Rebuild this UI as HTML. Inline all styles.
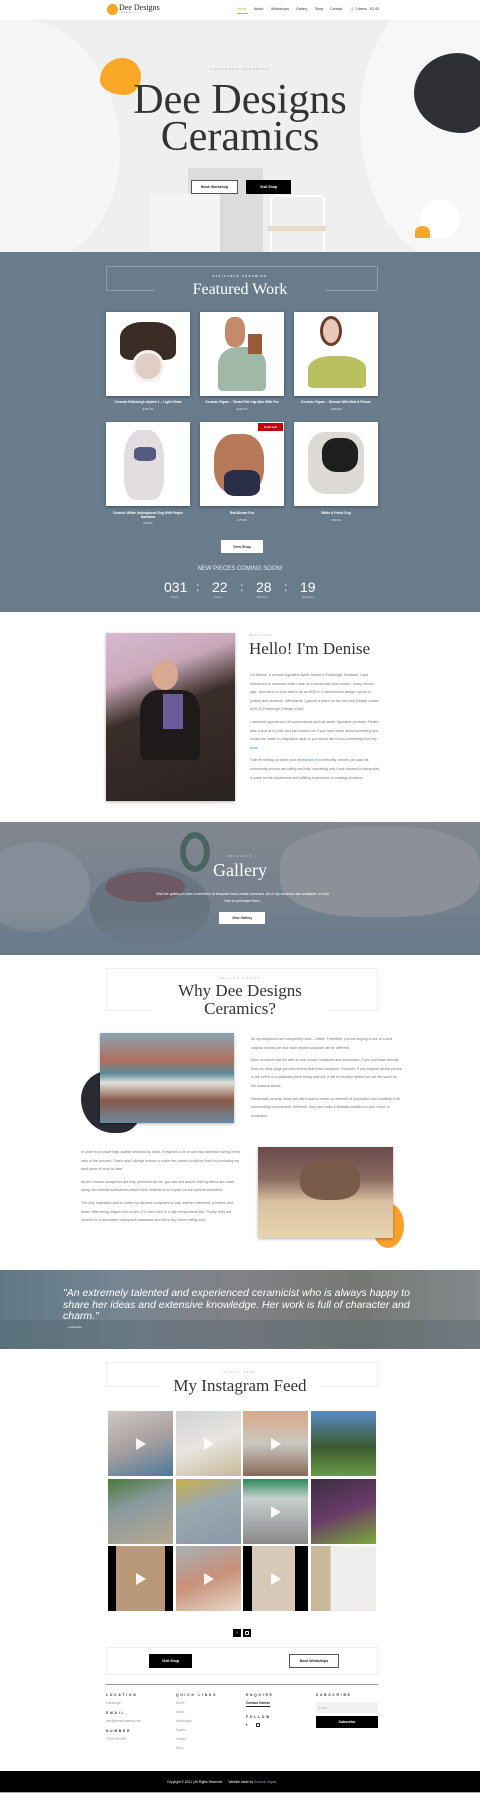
<!DOCTYPE html>
<html><head><meta charset="utf-8"><style>
*{margin:0;padding:0;box-sizing:border-box}
body{width:480px;height:1799px;position:relative;background:#fff;font-family:"Liberation Sans",sans-serif;color:#444;overflow:hidden}
.a{position:absolute}
.serif{font-family:"Liberation Serif",serif}
.c{text-align:center}
.btn{position:absolute;font-size:3.5px;font-weight:bold;display:flex;align-items:center;justify-content:center}
.blk{background:#000;color:#fff}
.out{border:1px solid #555;color:#222;background:#fff}
.small{font-size:3px;letter-spacing:1.5px}
p.t{font-size:3.6px;line-height:8.6px;color:#777;margin-bottom:4px}
.prod{position:absolute;width:84px;height:84px;background:#fff;box-shadow:0 1px 3px rgba(0,0,0,.35);overflow:hidden}
.pt{position:absolute;width:84px;text-align:center;color:#fff;font-size:3.3px;font-weight:bold}
.pp{position:absolute;width:84px;text-align:center;color:#e5e9ec;font-size:3px}
.ig{position:absolute;width:65px;height:65px}
.play{position:absolute;left:28px;top:27px;width:0;height:0;border-left:10px solid #fff;border-top:6px solid transparent;border-bottom:6px solid transparent;opacity:.9}
.fh{font-size:3.3px;letter-spacing:1.8px;font-weight:bold;color:#333;position:absolute}
.fl{font-size:3.2px;color:#999;position:absolute}
</style></head><body>

<!-- header -->
<div class="a" style="left:0;top:0;width:480px;height:20px;background:#fff"></div>
<div class="a" style="left:107px;top:4px;width:11px;height:11px;border-radius:50%;background:#f6a623"></div>
<div class="a serif" style="left:119px;top:3px;font-size:8px;color:#222">Dee Designs</div>
<div class="a" style="left:119px;top:12px;font-size:2px;letter-spacing:1px;color:#666">CERAMICS</div>
<div class="a" style="left:237px;top:7px;font-size:3.6px;color:#f6a623">Home</div>
<div class="a" style="left:237px;top:13px;width:11px;height:1px;background:#f6a623"></div>
<div class="a" style="left:254px;top:7px;font-size:3.6px;color:#333">About</div>
<div class="a" style="left:271px;top:7px;font-size:3.6px;color:#333">Workshops</div>
<div class="a" style="left:296px;top:7px;font-size:3.6px;color:#333">Gallery</div>
<div class="a" style="left:315px;top:7px;font-size:3.6px;color:#333">Shop</div>
<div class="a" style="left:330px;top:7px;font-size:3.6px;color:#333">Contact</div>
<div class="a" style="left:350px;top:7px;font-size:3.6px;color:#333">🛒 0 items - £0.00</div>

<!-- hero -->
<div class="a" style="left:0;top:20px;width:480px;height:232px;background:#efefef;overflow:hidden">
 <div class="a" style="left:-60px;top:0;width:180px;height:240px;background:#f6f6f6;border-radius:40% 60% 50% 50%"></div>
 <div class="a" style="left:360px;top:-20px;width:160px;height:260px;background:#f7f7f7;border-radius:50% 30% 40% 60%"></div>
 <div class="a" style="left:188px;top:148px;width:75px;height:84px;background:#dcdcdc"></div>
 <div class="a" style="left:150px;top:173px;width:70px;height:59px;background:#f4f4f4"></div>
 <div class="a" style="left:270px;top:175px;width:55px;height:57px;border:2px solid #fff;border-bottom:none;border-radius:6px 6px 0 0"></div>
 <div class="a" style="left:268px;top:206px;width:58px;height:5px;background:#e6dcc6"></div>
 <div class="a" style="left:100px;top:38px;width:41px;height:37px;background:#f8a826;border-radius:55% 45% 40% 60%/60% 50% 50% 40%"></div>
 <div class="a" style="left:414px;top:33px;width:80px;height:80px;background:#2f2f36;border-radius:55% 45% 40% 60%/50% 50% 50% 50%"></div>
 <div class="a" style="left:420px;top:179px;width:40px;height:40px;border-radius:50%;background:#fff"></div>
 <div class="a" style="left:415px;top:206px;width:15px;height:12px;border-radius:50% 50% 0 0;background:#f8a826"></div>
</div>
<div class="a c small" style="left:0;top:67px;width:480px;color:#aaa">HANDMADE CERAMICS</div>
<div class="a c serif" style="left:0;top:82px;width:480px;font-size:42px;line-height:37px;color:#333">Dee Designs<br>Ceramics</div>
<div class="btn out" style="left:191px;top:180px;width:47px;height:14px">Book Workshop</div>
<div class="btn blk" style="left:246px;top:180px;width:45px;height:14px">Visit Shop</div>

<!-- featured -->
<div class="a" style="left:0;top:252px;width:480px;height:360px;background:#687c8c"></div>
<div class="a" style="left:106px;top:266px;width:272px;height:25px;border:1px solid #8c9ca8"></div>
<div class="a c" style="left:0;top:275px;width:480px;font-size:2.5px;letter-spacing:1.5px;color:#fff;font-weight:bold">AVAILABLE CERAMICS</div>
<div class="a c serif" style="left:155px;top:281px;width:170px;font-size:16px;color:#fff;background:#687c8c">Featured Work</div>

<div class="prod" style="left:106px;top:312px"><div class="a" style="left:14px;top:10px;width:56px;height:38px;background:#3a2b25;border-radius:40% 40% 20% 20%"></div><div class="a" style="left:26px;top:38px;width:32px;height:32px;border-radius:50%;background:#e0cdc4;border:3px solid #f4f0ee"></div></div>
<div class="prod" style="left:200px;top:312px"><div class="a" style="left:25px;top:5px;width:20px;height:30px;background:#c48a6c;border-radius:40%"></div><div class="a" style="left:18px;top:35px;width:48px;height:44px;background:#9fb8a8;border-radius:40% 40% 10% 10%"></div><div class="a" style="left:48px;top:22px;width:14px;height:20px;background:#9a5a3a"></div></div>
<div class="prod" style="left:294px;top:312px"><div class="a" style="left:26px;top:4px;width:22px;height:30px;background:#e8c8b8;border:3px solid #6a3a2a;border-radius:50%"></div><div class="a" style="left:14px;top:44px;width:58px;height:32px;background:#b8c060;border-radius:40% 40% 10% 10%"></div></div>
<div class="pt" style="left:106px;top:400px">Ceramic Edinburgh skyline 1 – Light Globe</div>
<div class="pp" style="left:106px;top:407px">£150.00</div>
<div class="pt" style="left:200px;top:400px">Ceramic Figure – Tartan Flat Cap Man With Fox</div>
<div class="pp" style="left:200px;top:407px">£160.00</div>
<div class="pt" style="left:294px;top:400px">Ceramic Figure – Woman With Bird &amp; Flower</div>
<div class="pp" style="left:294px;top:407px">£150.00</div>

<div class="prod" style="left:106px;top:422px"><div class="a" style="left:18px;top:8px;width:40px;height:70px;background:#e2dde0;border-radius:40% 40% 30% 30%"></div><div class="a" style="left:28px;top:25px;width:22px;height:14px;background:#555b80;border-radius:30%"></div></div>
<div class="prod" style="left:200px;top:422px"><div class="a" style="left:14px;top:12px;width:50px;height:60px;background:#b8785a;border-radius:40%"></div><div class="a" style="left:24px;top:48px;width:36px;height:26px;background:#2a2e48;border-radius:30%"></div><div class="a" style="left:58px;top:1px;width:25px;height:8px;background:#c0000a;color:#fff;font-size:3px;font-weight:bold;text-align:center;line-height:8px">Sold out!</div></div>
<div class="prod" style="left:294px;top:422px"><div class="a" style="left:14px;top:10px;width:56px;height:62px;background:#ddd9d4;border-radius:30%"></div><div class="a" style="left:28px;top:16px;width:36px;height:34px;background:#1e1e1e;border-radius:40%"></div></div>
<div class="pt" style="left:106px;top:511px">Ceramic White Underglazed Dog With Purple Bandana</div>
<div class="pp" style="left:106px;top:521px">£65.00</div>
<div class="pt" style="left:200px;top:511px">Red-Brown Fox</div>
<div class="pp" style="left:200px;top:518px">£75.00</div>
<div class="pt" style="left:294px;top:511px">White &amp; Patch Dog</div>
<div class="pp" style="left:294px;top:518px">£50.00</div>

<div class="btn" style="left:221px;top:540px;width:42px;height:13px;background:#fff;color:#333">View Shop</div>
<div class="a c" style="left:0;top:566px;width:480px;font-size:6px;color:#e8ecef">NEW PIECES COMING SOON!</div>
<div class="a" style="left:164px;top:580px;font-size:14px;color:#fff;line-height:14px">031</div>
<div class="a" style="left:196px;top:580px;font-size:12px;color:#fff">:</div>
<div class="a" style="left:212px;top:580px;font-size:14px;color:#fff;line-height:14px">22</div>
<div class="a" style="left:240px;top:580px;font-size:12px;color:#fff">:</div>
<div class="a" style="left:256px;top:580px;font-size:14px;color:#fff;line-height:14px">28</div>
<div class="a" style="left:284px;top:580px;font-size:12px;color:#fff">:</div>
<div class="a" style="left:300px;top:580px;font-size:14px;color:#fff;line-height:14px">19</div>
<div class="a" style="left:171px;top:596px;font-size:2.5px;color:#ddd">Day(s)</div>
<div class="a" style="left:214px;top:596px;font-size:2.5px;color:#ddd">Hour(s)</div>
<div class="a" style="left:257px;top:596px;font-size:2.5px;color:#ddd">Minute(s)</div>
<div class="a" style="left:302px;top:596px;font-size:2.5px;color:#ddd">Second(s)</div>

<!-- about -->
<div class="a" style="left:106px;top:633px;width:129px;height:168px;background:linear-gradient(160deg,#d8b8d0 0%,#c8a8b8 25%,#3a2e2a 45%,#2a2220 100%);box-shadow:0 1px 3px rgba(0,0,0,.3)"></div>
<div class="a" style="left:152px;top:660px;width:26px;height:30px;border-radius:50%;background:#d9a892"></div>
<div class="a" style="left:140px;top:690px;width:60px;height:70px;background:#1e1a1a;border-radius:30% 30% 10% 10%"></div>
<div class="a" style="left:163px;top:694px;width:20px;height:35px;background:#6a5c9a"></div>
<div class="a small" style="left:250px;top:634px;color:#aaa;font-size:2.5px">WELCOME</div>
<div class="a serif" style="left:249px;top:639px;font-size:17px;color:#333">Hello! I'm Denise</div>
<div class="a" style="left:250px;top:671px;width:130px">
<p class="t">I'm Denise, a ceramic figurative Artist, based in Edinburgh, Scotland. I was introduced to ceramics while I was on a community Arts course., many moons ago., and went on from that to do an HND in 3-dimensional design course in pottery and ceramics. Afterwards, I gained a place on the Arts and Design course at ECA (Edinburgh College of Art).</p>
<p class="t">I welcome special one-off commissions such as small, figurative portraits. Please take a look at my site and just contact me if you have ideas about something you would like made in a figurative style or you would like to buy something from <span style="color:#3a8ae0">my store</span></p>
<p class="t">I will be setting up some pilot <span style="color:#3a8ae0">workshops</span> in community venues (as soon as community venues are safely and fully operating) and I look forward to being able to pass on the excitement and fulfilling experience of creating ceramics.</p>
</div>

<!-- gallery -->
<div class="a" style="left:0;top:822px;width:480px;height:133px;background:linear-gradient(180deg,#8a8c90 0%,#7a8490 50%,#6a7a8a 100%);overflow:hidden">
 <div class="a" style="left:-20px;top:20px;width:110px;height:90px;border-radius:50%;background:#8e959e"></div>
 <div class="a" style="left:90px;top:45px;width:120px;height:80px;border-radius:50%;background:#66707c"></div>
 <div class="a" style="left:105px;top:50px;width:80px;height:30px;border-radius:50%;background:#6e4a52"></div>
 <div class="a" style="left:280px;top:5px;width:200px;height:90px;border-radius:40%;background:#9a98a0"></div>
 <div class="a" style="left:180px;top:10px;width:30px;height:40px;border-radius:50%;border:6px solid #3a5a50"></div>
 <div class="a" style="left:0;top:0;width:480px;height:133px;background:rgba(110,125,140,.3)"></div>
 <div class="a" style="left:0;top:90px;width:480px;height:43px;background:linear-gradient(180deg,rgba(104,124,140,0),#6a7c8c)"></div>
</div>
<div class="a c small" style="left:0;top:855px;width:480px;color:#dde;font-size:2.5px">PRODUCTS</div>
<div class="a c serif" style="left:0;top:860px;width:480px;font-size:18px;color:#fff">Gallery</div>
<div class="a c" style="left:155px;top:891px;width:175px;font-size:3.6px;line-height:7px;color:#fff">Visit the gallery to view a selection of bespoke hand-made ceramics. All of my ceramics are available, so feel free to purchase them.</div>
<div class="btn" style="left:219px;top:912px;width:46px;height:12px;background:#fff;color:#333">View Gallery</div>

<!-- why -->
<div class="a" style="left:106px;top:968px;width:272px;height:43px;border:1px solid #eee"></div>
<div class="a c small" style="left:0;top:977px;width:480px;color:#aaa;font-size:2.5px">SELLING POINTS</div>
<div class="a c serif" style="left:150px;top:982px;width:180px;font-size:17px;line-height:18px;color:#333;background:#fff">Why Dee Designs<br>Ceramics?</div>
<div class="a" style="left:81px;top:1071px;width:60px;height:62px;background:#2a2a32;border-radius:50% 30% 40% 60%"></div>
<div class="a" style="left:100px;top:1033px;width:134px;height:90px;background:linear-gradient(180deg,#8aa4b0 0%,#b07060 30%,#5a8a9a 45%,#e0e0d8 55%,#8a5a4a 75%,#6a8aa0 100%);box-shadow:0 1px 3px rgba(0,0,0,.3)"></div>
<div class="a" style="left:251px;top:1035px;width:152px">
<p class="t">All my sculptures are completely hand – made. Therefore, you are buying a one of a kind original ceramic art and each repeat sculpture will be different.</p>
<p class="t">Each sculpture has it's with its own unique character and expression. If you purchase directly from my shop page you will receive that exact sculpture. However, if you request similar pieces in the event of a particular piece being sold out, it will be broadly similar but not the same for the reasons above.</p>
<p class="t">Handmade ceramic items are often said to create an element of inspiration and creativity in its surrounding environment, therefore, they can make a fantastic addition to your home or workplace.</p>
</div>
<div class="a" style="left:81px;top:1148px;width:160px">
<p class="t">In order to produce high-quality ceramics by hand, it requires a lot of care and attention during every step of the process. That's why I always ensure to make the current sculpture that I'm producing my best piece of work to date.</p>
<p class="t">As the ceramic sculptures are fully produced by me, you can rest assure that my items are made using non-harmful substances which have minimal to no impact on the local environment.</p>
<p class="t">The only materials used to make my ceramic sculptures is clay, earthen elements, powders and water. After being shaped into a form, it is then fired in a high temperature kiln. Finally, they are covered in a decorative waterproof substance and left to dry before being sold.</p>
</div>
<div class="a" style="left:372px;top:1203px;width:32px;height:45px;background:#f8a02a;border-radius:40% 50% 50% 50%"></div>
<div class="a" style="left:258px;top:1147px;width:135px;height:91px;background:linear-gradient(180deg,#6a4a4a 0%,#8a6a60 35%,#d8c0a0 60%,#e8d4b0 100%);box-shadow:0 1px 3px rgba(0,0,0,.3)"></div>
<div class="a" style="left:300px;top:1160px;width:60px;height:40px;border-radius:40%;background:#7a5a48"></div>

<!-- quote -->
<div class="a" style="left:0;top:1270px;width:480px;height:79px;background:linear-gradient(90deg,#6a8a98 0%,#8a9aa8 25%,#9a9498 50%,#8a8880 75%,#9aa0a0 100%);overflow:hidden">
 <div class="a" style="left:0;top:50px;width:480px;height:29px;background:rgba(90,110,120,.4)"></div>
 <div class="a" style="left:0;top:0;width:480px;height:79px;background:rgba(60,70,80,.25)"></div>
</div>
<div class="a" style="left:63px;top:1288px;width:360px;font-size:10.5px;line-height:11.5px;font-style:italic;color:#fff">"An extremely talented and experienced ceramicist who is always happy to share her ideas and extensive knowledge. Her work is full of character and charm."</div>
<div class="a" style="left:66px;top:1326px;font-size:2.5px;color:#fff">— Local Artist</div>

<!-- instagram -->
<div class="a" style="left:106px;top:1362px;width:272px;height:25px;border:1px solid #eee"></div>
<div class="a c small" style="left:0;top:1371px;width:480px;color:#aaa;font-size:2.5px">SOCIAL FEED</div>
<div class="a c serif" style="left:160px;top:1376px;width:160px;font-size:17px;color:#333;background:#fff">My Instagram Feed</div>
<div class="ig" style="left:108px;top:1411px;background:linear-gradient(160deg,#cfc8c4,#a8a0a0 50%,#4a7a98)"><div class="play"></div></div>
<div class="ig" style="left:176px;top:1411px;background:linear-gradient(160deg,#d0d4d8,#e8e4e0 50%,#c8b898)"><div class="play"></div></div>
<div class="ig" style="left:243px;top:1411px;background:linear-gradient(180deg,#d8a888,#c8c8c0 50%,#8a6a58)"><div class="play"></div></div>
<div class="ig" style="left:311px;top:1411px;background:linear-gradient(180deg,#5a8ac8 0%,#3a5a30 55%,#6a9a48 100%)"></div>
<div class="ig" style="left:108px;top:1479px;background:linear-gradient(160deg,#4a7a38,#8a9aa0 40%,#b8a890)"></div>
<div class="ig" style="left:176px;top:1479px;background:linear-gradient(160deg,#c8b048,#9aa8b0 40%,#8a98a8)"></div>
<div class="ig" style="left:243px;top:1479px;background:linear-gradient(180deg,#2a8a58 0%,#c8d0d0 30%,#8a8888 100%)"><div class="play"></div></div>
<div class="ig" style="left:311px;top:1479px;background:linear-gradient(160deg,#3a3040,#6a3a6a 50%,#7aaa38)"></div>
<div class="ig" style="left:108px;top:1546px;background:linear-gradient(90deg,#000 0 12%,#b89878 12% 88%,#000 88%)"><div class="play"></div></div>
<div class="ig" style="left:176px;top:1546px;background:linear-gradient(160deg,#a8b0b8,#c89078 50%,#e8d8c8)"><div class="play"></div></div>
<div class="ig" style="left:243px;top:1546px;background:linear-gradient(90deg,#000 0 14%,#d8c8b8 14% 80%,#000 80%)"><div class="play"></div></div>
<div class="ig" style="left:311px;top:1546px;background:linear-gradient(90deg,#c8b898 0 30%,#f0eeec 30%)"></div>

<!-- social -->
<div class="a" style="left:233px;top:1629px;width:8px;height:8px;background:#000;color:#fff;font-size:4px;text-align:center;line-height:8px">f</div>
<div class="a" style="left:243px;top:1629px;width:8px;height:8px;background:#000"><div class="a" style="left:2px;top:2px;width:4px;height:4px;border:1px solid #fff;border-radius:1px"></div></div>

<!-- cta -->
<div class="a" style="left:106px;top:1647px;width:272px;height:28px;border:1px solid #eee"></div>
<div class="btn blk" style="left:149px;top:1654px;width:43px;height:14px">Visit Shop</div>
<div class="btn out" style="left:289px;top:1654px;width:50px;height:14px">Book Workshops</div>
<div class="a" style="left:106px;top:1684px;width:272px;height:1px;background:#999"></div>

<div class="fh" style="left:106px;top:1693px">LOCATION</div>
<div class="fl" style="left:106px;top:1701px">Edinburgh</div>
<div class="fh" style="left:106px;top:1711px">EMAIL</div>
<div class="fl" style="left:106px;top:1719px">dee@deesceramics.com</div>
<div class="fh" style="left:106px;top:1729px">NUMBER</div>
<div class="fl" style="left:106px;top:1737px">07000 000000</div>
<div class="fh" style="left:176px;top:1693px">QUICK LINKS</div>
<div class="fl" style="left:176px;top:1701px">Home</div>
<div class="fl" style="left:176px;top:1710px">About</div>
<div class="fl" style="left:176px;top:1719px">Workshops</div>
<div class="fl" style="left:176px;top:1728px">Events</div>
<div class="fl" style="left:176px;top:1737px">Gallery</div>
<div class="fl" style="left:176px;top:1746px">Shop</div>
<div class="fh" style="left:246px;top:1693px">ENQUIRE</div>
<div class="a" style="left:246px;top:1701px;font-size:3.3px;font-weight:bold;color:#222;border-bottom:1px solid #222;padding-bottom:1px">Contact Denise</div>
<div class="fh" style="left:246px;top:1715px">FOLLOW</div>
<div class="a" style="left:246px;top:1722px;font-size:4px;font-weight:bold;color:#222">f</div>
<div class="a" style="left:256px;top:1723px;width:4px;height:4px;border:1px solid #222;border-radius:1px"></div>
<div class="fh" style="left:316px;top:1693px">SUBSCRIBE</div>
<div class="a" style="left:316px;top:1702px;width:62px;height:11px;background:#f1f1f1;font-size:3px;color:#aaa;padding:4px 3px">Email</div>
<div class="btn blk" style="left:316px;top:1716px;width:62px;height:12px">Subscribe</div>

<div class="a" style="left:0;top:1771px;width:480px;height:21px;background:#000"></div>
<div class="a" style="left:0;top:1792px;width:480px;height:1px;background:#aaa"></div>
<div class="a" style="left:167px;top:1780px;font-size:3.2px;color:#fff">Copyright © 2021 | All Rights Reserved &nbsp; &nbsp; &nbsp; Website made by <span style="color:#8ab">Scorchio Digital</span></div>
</body></html>
